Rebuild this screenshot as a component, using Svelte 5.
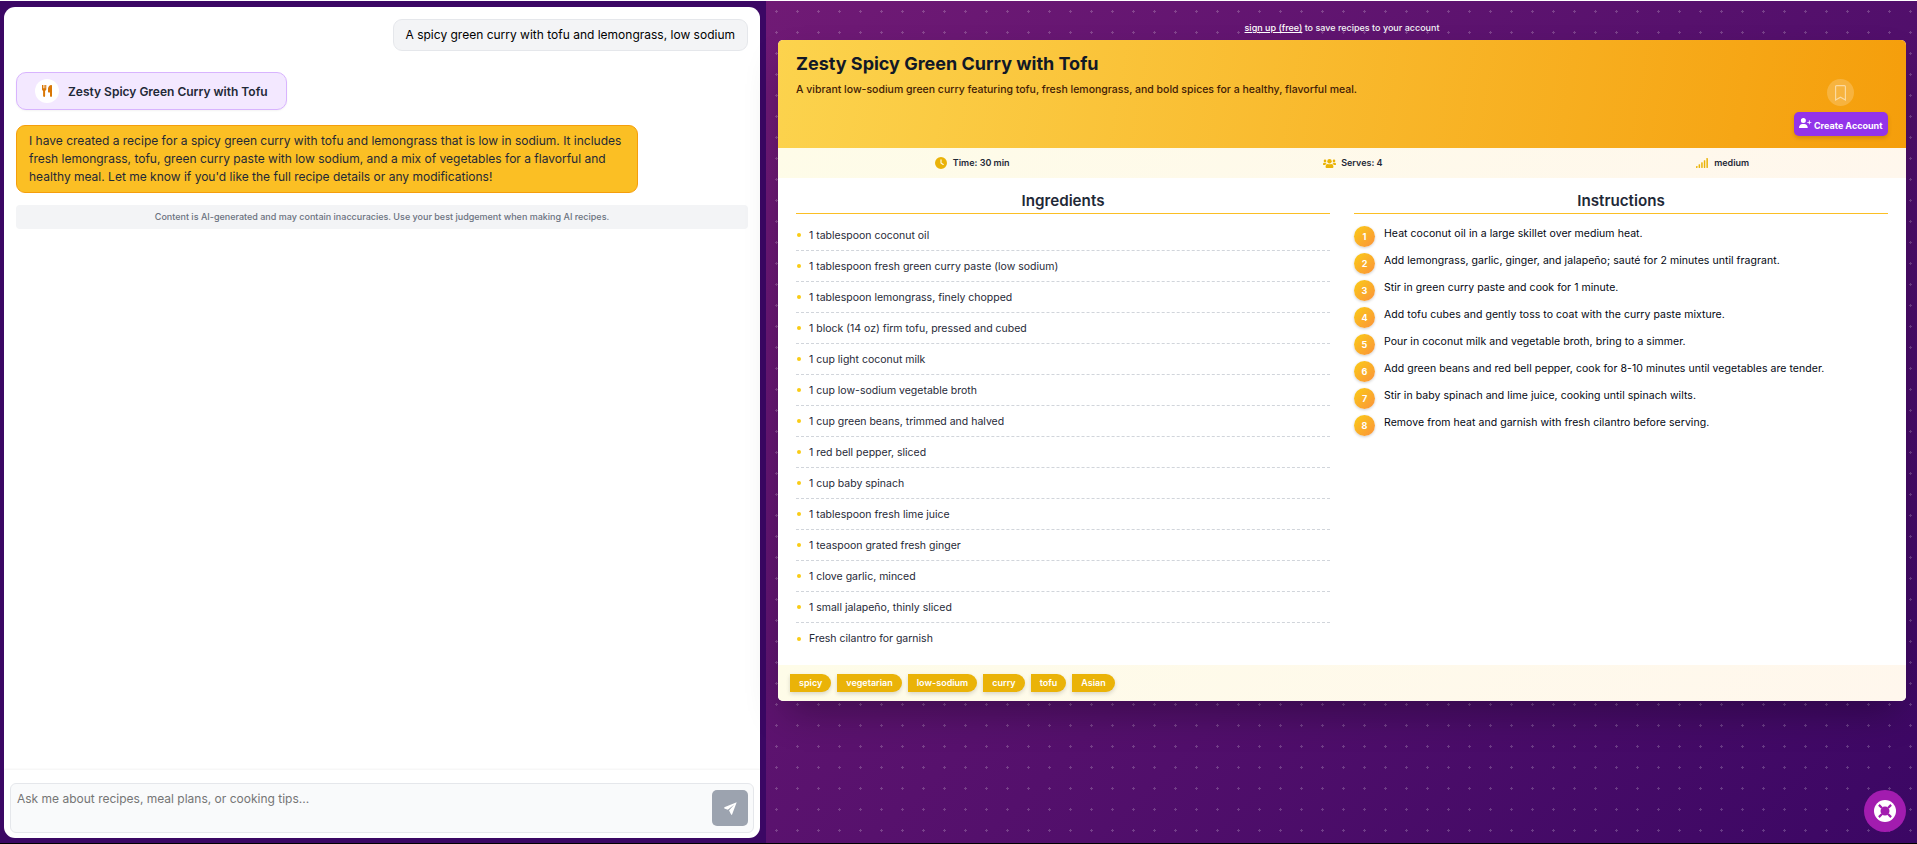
<script>
  const ingredients = [
    '1 tablespoon coconut oil',
    '1 tablespoon fresh green curry paste (low sodium)',
    '1 tablespoon lemongrass, finely chopped',
    '1 block (14 oz) firm tofu, pressed and cubed',
    '1 cup light coconut milk',
    '1 cup low-sodium vegetable broth',
    '1 cup green beans, trimmed and halved',
    '1 red bell pepper, sliced',
    '1 cup baby spinach',
    '1 tablespoon fresh lime juice',
    '1 teaspoon grated fresh ginger',
    '1 clove garlic, minced',
    '1 small jalapeño, thinly sliced',
    'Fresh cilantro for garnish',
  ];
  const steps = [
    'Heat coconut oil in a large skillet over medium heat.',
    'Add lemongrass, garlic, ginger, and jalapeño; sauté for 2 minutes until fragrant.',
    'Stir in green curry paste and cook for 1 minute.',
    'Add tofu cubes and gently toss to coat with the curry paste mixture.',
    'Pour in coconut milk and vegetable broth, bring to a simmer.',
    'Add green beans and red bell pepper, cook for 8-10 minutes until vegetables are tender.',
    'Stir in baby spinach and lime juice, cooking until spinach wilts.',
    'Remove from heat and garnish with fresh cilantro before serving.',
  ];
  const tags = ['spicy', 'vegetarian', 'low-sodium', 'curry', 'tofu', 'Asian'];
</script>

<div class="app">
  <section class="chat">
    <div class="panel">
      <div class="messages">
        <div class="user">A spicy green curry with tofu and lemongrass, low sodium</div>
        <div class="pill">
          <span class="pill-icon">
            <svg width="12" height="12" viewBox="0 0 12 12" fill="#d97706">
              <path d="M1 0h1v3.200h.6V0h1v3.200h.6V0h1.100v3.900c0 1-.5 1.600-1.200 1.900v5.300c0 .5-.4.900-1 .9s-1-.4-1-.9V5.800C1.400 5.500 1 4.900 1 3.900z" />
              <path d="M11 .6v10.500c0 .5-.4.900-1 .9s-1-.4-1-.9V7.500H7.500c-.3 0-.5-.2-.5-.5V4C7 1.800 8.500 0 10.300 0c.4 0 .7.200.7.600z" />
            </svg>
          </span>
          <span>Zesty Spicy Green Curry with Tofu</span>
        </div>
        <div class="reply">I have created a recipe for a spicy green curry with tofu and lemongrass that is low in sodium. It includes fresh lemongrass, tofu, green curry paste with low sodium, and a mix of vegetables for a flavorful and healthy meal. Let me know if you'd like the full recipe details or any modifications!</div>
        <div class="notice">Content is AI-generated and may contain inaccuracies. Use your best judgement when making AI recipes.</div>
      </div>
      <div class="composer">
        <div class="field">
          <span class="placeholder">Ask me about recipes, meal plans, or cooking tips...</span>
          <button class="send" aria-label="Send">
            <svg width="13" height="13" viewBox="0 0 13 13" fill="#fff">
              <path d="M12.700.3.300 5.300v1.200l3.500 1.300L10.300 2.600 5 8.600l.2.200 2 3.900h.8z" />
            </svg>
          </button>
        </div>
      </div>
    </div>
  </section>

  <section class="stage">
    <p class="signup"><a href="#signup">sign up (free)</a> to save recipes to your account</p>
    <article class="card">
      <header>
        <h1>Zesty Spicy Green Curry with Tofu</h1>
        <p class="summary">A vibrant low-sodium green curry featuring tofu, fresh lemongrass, and bold spices for a healthy, flavorful meal.</p>
        <div class="actions">
          <span class="bookmark">
            <svg width="11" height="16" viewBox="0 0 11 16" fill="none" stroke="#fff" stroke-opacity=".5" stroke-width="1.200">
              <path d="M.6 15V1.600q0-1 1-1h7.800q1 0 1 1V15L5.500 12.300z" />
            </svg>
          </span>
          <button class="create">
            <svg width="12.500" height="10" viewBox="0 0 640 512" fill="#fff">
              <path d="M96 128a128 128 0 1 1 256 0A128 128 0 1 1 96 128zM0 482.300C0 383.800 79.800 304 178.300 304h91.400C368.200 304 448 383.800 448 482.300c0 16.400-13.300 29.700-29.700 29.700H29.700C13.300 512 0 498.700 0 482.300zM504 312V248H440c-13.300 0-24-10.700-24-24s10.700-24 24-24h64V136c0-13.300 10.700-24 24-24s24 10.700 24 24v64h64c13.300 0 24 10.700 24 24s-10.700 24-24 24H552v64c0 13.300-10.700 24-24 24s-24-10.700-24-24z" />
            </svg>
            <span>Create Account</span>
          </button>
        </div>
      </header>

      <div class="stats">
        <span class="stat">
          <svg width="12" height="12" viewBox="0 0 512 512" fill="#eab308">
            <path d="M256 0a256 256 0 1 1 0 512A256 256 0 1 1 256 0zM232 120V256c0 8 4 15.500 10.700 20l96 64c11 7.400 25.900 4.400 33.300-6.700s4.400-25.900-6.700-33.300L280 243.200V120c0-13.300-10.700-24-24-24s-24 10.700-24 24z" />
          </svg>
          Time: 30 min
        </span>
        <span class="stat narrow">
          <svg width="13" height="9" viewBox="0 0 13 9" fill="#eab308">
            <circle cx="2" cy="1.900" r="1.300" />
            <circle cx="11" cy="1.900" r="1.300" />
            <circle cx="6.500" cy="2.200" r="2.200" />
            <path d="M0 5.600V4.900Q0 3.700 1.300 3.700h1.400q.6 0 1 .4Q2.600 4.700 2.400 6H.4Q0 6 0 5.600zM13 5.600V4.900q0-1.200-1.300-1.200h-1.400q-.6 0-1 .4 1.100.6 1.300 1.900h2q.4 0 .4-.4zM2.600 8.100V7.300Q2.600 5 4.800 5q1.700.700 3.400 0 2.200 0 2.200 2.300v.8q0 .9-.9.900h-6q-.9 0-.9-.9z" />
          </svg>
          Serves: 4
        </span>
        <span class="stat">
          <svg width="12" height="10" viewBox="0 0 12 10" fill="#eab308">
            <rect x="0" y="8" width="1.500" height="2" rx=".4" />
            <rect x="2.600" y="6.300" width="1.500" height="3.700" rx=".4" />
            <rect x="5.200" y="4.300" width="1.500" height="5.700" rx=".4" />
            <rect x="7.800" y="2.200" width="1.500" height="7.800" rx=".4" />
            <rect x="10.400" y="0" width="1.500" height="10" rx=".4" />
          </svg>
          medium
        </span>
      </div>

      <div class="columns">
        <div>
          <h2>Ingredients</h2>
          <ul>
            {#each ingredients as item}
              <li><i></i>{item}</li>
            {/each}
          </ul>
        </div>
        <div>
          <h2>Instructions</h2>
          <ol>
            {#each steps as step, n}
              <li><b>{n + 1}</b><span>{step}</span></li>
            {/each}
          </ol>
        </div>
      </div>

      <footer>
        {#each tags as tag}
          <span class="tag">{tag}</span>
        {/each}
      </footer>
    </article>

    <button class="help" aria-label="Help">
      <svg width="22" height="22" viewBox="0 0 22 22">
        <circle cx="11" cy="11" r="11" fill="#fff" />
        <path d="M4.900 4.900 8 8M17.100 4.900 14 8M4.900 17.100 8 14M17.100 17.100 14 14" stroke="#a21caf" stroke-width="2.200" />
        <circle cx="11" cy="11" r="4.500" fill="#a21caf" />
      </svg>
    </button>
  </section>
</div>

<style>
  :global(body) { margin: 0; background: #fff; overflow: hidden; }
  .app, .app * { box-sizing: border-box; }
  .app {
    display: flex;
    height: 844px;
    border-top: 1px solid #fff;
    border-bottom: 1px solid #000;
    font-family: Inter, "Liberation Sans", sans-serif;
    font-size: 12px;
    color: #1f2937;
  }
  h1, h2, p, ul, ol { margin: 0; padding: 0; }
  ul, ol { list-style: none; }
  button { font: inherit; border: 0; padding: 0; }

  .chat { width: 766px; flex: none; padding: 6px 6px 5px 4px; background: #3b0764; }
  .panel { height: 100%; display: flex; flex-direction: column; background: #fff; border-radius: 11px; overflow: hidden; }
  .messages { flex: 1; display: flex; flex-direction: column; align-items: flex-start; padding: 12px; }
  .user {
    align-self: flex-end; height: 32px; padding: 0 12px; line-height: 30px;
    border: 1px solid #e5e7eb; border-radius: 9px; background: #f3f4f6; color: #000; white-space: nowrap;
  }
  .pill {
    display: flex; align-items: center; gap: 9px; height: 38px; margin-top: 21px; padding: 0 18px;
    border: 1px solid #d8b4fe; border-radius: 10px; background: #f3e8ff;
    box-shadow: 0 1px 2px rgba(0, 0, 0, .05); font-weight: 600;
  }
  .pill-icon { width: 24px; height: 24px; border-radius: 50%; background: #fff; display: grid; place-items: center; }
  .reply {
    width: 622px; height: 68px; margin-top: 15px; padding: 6px 12px; line-height: 18px;
    border: 1px solid #f59e0b; border-radius: 9px; background: #fbbf24;
  }
  .notice {
    align-self: stretch; height: 24px; margin-top: 12px; border-radius: 4px; background: #f3f4f6;
    color: #6b7280; font-size: 9px; font-weight: 500; line-height: 24px; text-align: center;
  }
  .composer { padding: 13px 6px 5px; box-shadow: 0 -1px 2px rgba(0, 0, 0, .05); }
  .field {
    display: flex; justify-content: space-between; height: 50px; padding: 6px 5px 6px 6px;
    border: 1px solid #e5e7eb; border-radius: 6px; background: #f9fafb;
  }
  .placeholder { color: #757575; line-height: 18px; }
  .send { width: 36px; height: 36px; border-radius: 5px; background: #9ca3af; display: grid; place-items: center; }

  .stage {
    position: relative; flex: 1; display: flex; flex-direction: column; padding: 19px 11px 0 12px;
    background:
      radial-gradient(circle, rgba(255, 255, 255, .2) 1.100px, transparent 1.100px) 0 0 / 21px 21px,
      linear-gradient(135deg, #701a75, #3b0764);
  }
  .signup { height: 20px; line-height: 16px; color: #f3f4f6; font-size: 9px; font-weight: 500; text-align: center; }
  .signup a { color: #fff; text-decoration: underline; }
  .card { border-radius: 5px; overflow: hidden; background: #fff; box-shadow: 0 18px 36px -8px rgba(0, 0, 0, .3); }
  header {
    position: relative; height: 108px; padding: 12px 18px;
    background: linear-gradient(100deg, #fcd34d, #f59e0b);
  }
  h1 { font-size: 18px; line-height: 24px; font-weight: 700; color: #111827; }
  .summary { margin-top: 7px; font-size: 10.500px; font-weight: 500; line-height: 14px; color: #422006; }
  .actions { position: absolute; right: 18px; bottom: 12px; display: flex; flex-direction: column; align-items: flex-end; gap: 6px; }
  .bookmark { width: 27px; height: 27px; margin-right: 34px; border-radius: 50%; background: rgba(255, 255, 255, .2); display: grid; place-items: center; }
  .create {
    display: flex; align-items: center; gap: 2px; height: 24px; padding: 0 5.500px; border-radius: 5px;
    background: #9333ea; color: #fff; font-size: 9px; font-weight: 700; white-space: nowrap;
    box-shadow: 0 2px 4px rgba(0, 0, 0, .15);
  }
  .create svg { margin-bottom: 3px; }
  .create span { padding-top: 3px; }

  .stats {
    display: flex; justify-content: space-around; height: 30px;
    background: linear-gradient(135deg, #fefce8, #fff7ed);
    font-size: 9px; font-weight: 600; line-height: 12px;
  }
  .stat { display: flex; align-items: center; gap: 6px; }
  .stat.narrow { gap: 5px; }

  .columns { display: grid; grid-template-columns: 1fr 1fr; gap: 24px; height: 487px; padding: 12px 18px; }
  h2 { height: 24px; line-height: 22px; border-bottom: 1px solid #fbbf24; text-align: center; font-size: 15.200px; font-weight: 600; }
  ul { padding-top: 6px; }
  ul li {
    display: flex; align-items: center; gap: 8px; height: 31px; padding-left: 1px;
    border-bottom: 1px dashed #d1d5db; font-size: 10.500px; color: #1f2937;
  }
  ul li:last-child { border-bottom: 0; }
  ul i { width: 4px; height: 4px; border-radius: 50%; background: #facc15; }
  ol { padding-top: 11px; }
  ol li { display: flex; gap: 9px; height: 27px; font-size: 10.500px; line-height: 17px; color: #030712; }
  ol li span { letter-spacing: .05px; }
  ol b {
    width: 21px; height: 21px; margin-top: 1px; border-radius: 50%; color: #fff; font-size: 9px; line-height: 21px; text-align: center;
    background: linear-gradient(135deg, #facc15, #fb923c); box-shadow: 0 1px 3px rgba(0, 0, 0, .2);
  }
  footer { display: flex; gap: 6px; height: 36px; padding: 9px 12px; background: linear-gradient(135deg, #fefce8, #fff7ed); }
  .tag {
    height: 18px; padding: 0 9px; border-radius: 0 9px 9px 0; background: #eab308; color: #fff;
    font-size: 9px; font-weight: 600; line-height: 18px; box-shadow: 0 2px 4px rgba(0, 0, 0, .15);
  }
  .help {
    position: absolute; right: 11px; bottom: 11px; width: 42px; height: 42px; border-radius: 50%;
    display: grid; place-items: center; background: #a21caf;
  }
</style>
